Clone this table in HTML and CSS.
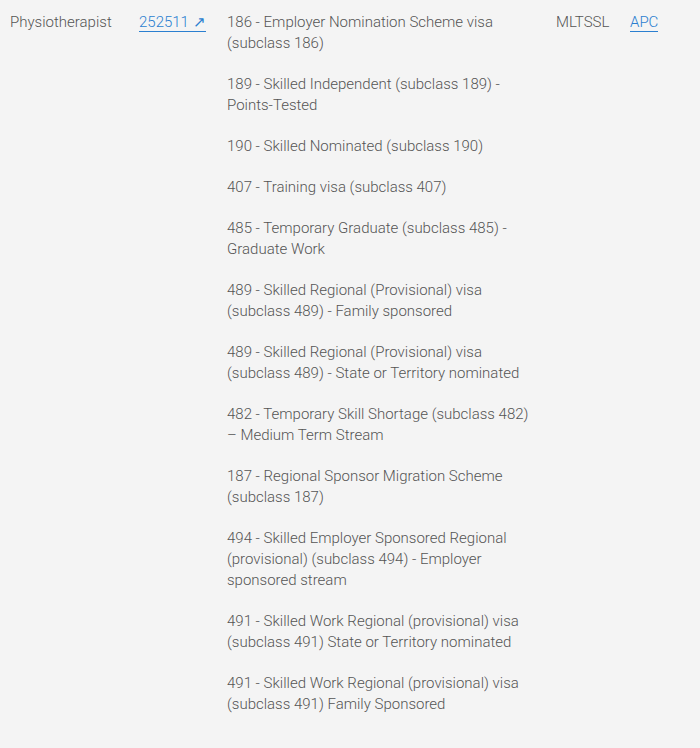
FILE: index.html
```html
<!DOCTYPE html>
<html lang="en">
<head>
    <meta charset="UTF-8">
    <meta name="viewport" content="width=device-width, initial-scale=1.0">
    <title>Occupation List</title>
    <link rel="stylesheet" href="styles.css">
</head>
<body>
    <table class="occupations">
        <tr>
            <td class="col-name">Physiotherapist</td>
            <td class="col-code"><a href="#">252511 &#8599;</a></td>
            <td class="col-visas">
                <p>186 - Employer Nomination Scheme visa (subclass 186)</p>
                <p>189 - Skilled Independent (subclass 189) - Points-Tested</p>
                <p>190 - Skilled Nominated (subclass 190)</p>
                <p>407 - Training visa (subclass 407)</p>
                <p>485 - Temporary Graduate (subclass 485) - Graduate Work</p>
                <p>489 - Skilled Regional (Provisional) visa (subclass 489) - Family sponsored</p>
                <p>489 - Skilled Regional (Provisional) visa (subclass 489) - State or Territory nominated</p>
                <p>482 - Temporary Skill Shortage (subclass 482) &ndash; Medium Term Stream</p>
                <p>187 - Regional Sponsor Migration Scheme (subclass 187)</p>
                <p>494 - Skilled Employer Sponsored Regional (provisional) (subclass 494) - Employer sponsored stream</p>
                <p>491 - Skilled Work Regional (provisional) visa (subclass 491) State or Territory nominated</p>
                <p>491 - Skilled Work Regional (provisional) visa (subclass 491) Family Sponsored</p>
            </td>
            <td class="col-list">MLTSSL</td>
            <td class="col-body"><a href="#">APC</a></td>
        </tr>
    </table>
</body>
</html>
```

FILE: styles.css
```css
body {
    font-family: Roboto, "Noto Sans", sans-serif;
    font-weight: 300;
    font-size: 15px;
    line-height: 21px;
    margin: 0;
    padding: 0;
    background-color: #f4f4f4;
    color: #555;
}
.occupations {
    border-collapse: collapse;
}
.occupations td {
    vertical-align: top;
    padding: 12px 10px 20px;
}
.col-name {
    width: 109px;
}
.col-code {
    width: 68px;
}
.col-visas {
    width: 309px;
}
.col-list {
    width: 54px;
}
.col-visas p {
    margin: 0 0 20px;
}
.col-visas p:last-child {
    margin-bottom: 0;
}
a {
    color: #2b7fd0;
    text-decoration: none;
    border-bottom: 1px solid #2b7fd0;
    white-space: nowrap;
}
```
